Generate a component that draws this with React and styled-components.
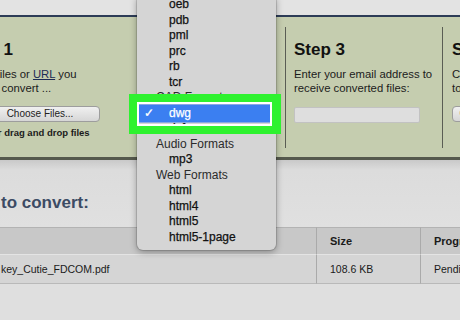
import React from 'react';
import styled, { createGlobalStyle } from 'styled-components';

const GlobalStyle = createGlobalStyle`
  html, body {
    margin: 0;
    padding: 0;
    background: #e0e0e0;
  }
  body {
    font-family: "Liberation Sans", Arial, sans-serif;
    color: #141414;
  }
`;

// page frame
const Page = styled.div`
  position: relative;
  width: 460px;
  height: 320px;
  overflow: hidden;
  background: #dfdfdf;
`;

const TopStrip = styled.div`
  height: 15px;
  background: #e3e3e3;
  border-bottom: 2px solid #2d3c57;
`;

// green steps panel
const Panel = styled.div`
  display: flex;
  height: 130px;
  padding-top: 10px;
  margin-left: -42px;
  background: #c5cdaf;
  border-bottom: 3px solid #55594d;
`;

const Column = styled.div`
  flex: none;
  box-sizing: border-box;
  width: ${p => p.$w}px;
  height: 121px;
  padding: 13px 0 0 ${p => p.$pad}px;
  border-left: ${p => (p.$sep ? '1px solid #5a5d54' : 'none')};
  overflow: hidden;
  white-space: nowrap;
`;

const StepTitle = styled.div`
  font-weight: bold;
  font-size: 17px;
  line-height: 20px;
  color: #111;
`;

const StepText = styled.div`
  margin-top: 7px;
  font-size: 11.3px;
  line-height: 14px;
  color: #1b1b1b;
`;

const Link = styled.span`
  color: #1d2a55;
  text-decoration: underline;
`;

const FileButton = styled.div`
  box-sizing: border-box;
  width: ${p => p.$w}px;
  height: 16px;
  margin: 11px 0 0 ${p => p.$shift}px;
  border: 1px solid #9d9d9d;
  border-radius: 4px;
  background: linear-gradient(#f0f0f0, #d6d6d6);
  font-size: 10px;
  line-height: 14px;
  text-align: center;
  color: #222;
`;

const EmailInput = styled.div`
  box-sizing: border-box;
  width: 126px;
  height: 16px;
  margin-top: 12px;
  border: 1px solid #c2c2c2;
  border-radius: 2px;
  background: #dedede;
`;

const DropNote = styled.div`
  margin: 5px 0 0 30px;
  font-weight: bold;
  font-size: 9.5px;
  line-height: 12px;
  color: #1b1b1b;
`;

// files section
const Section = styled.div`
  height: 34px;
  padding-top: 33px;
  background: linear-gradient(#c9c9c9, #dcdcdc 10px, #e0e0e0);
`;

const Heading = styled.div`
  padding-left: 1px;
  font-weight: bold;
  font-size: 17px;
  line-height: 20px;
  color: #3c4b64;
`;

const Table = styled.div`
  display: grid;
  grid-template-columns: 316px 104px 1fr;
`;

const Cell = styled.div`
  display: flex;
  align-items: center;
  box-sizing: border-box;
  height: ${p => (p.$head ? 27 : 30)}px;
  padding-left: ${p => (p.$first ? 1 : 13)}px;
  background: ${p => (p.$head ? '#c8c8c8' : '#d5d5d5')};
  border-top: 1px solid ${p => (p.$head ? '#b3b3b3' : '#e4e4e4')};
  border-bottom: ${p => (p.$head ? 'none' : '1px solid #b9b9b9')};
  border-left: ${p => (p.$first ? 'none' : '1px solid #aaaaaa')};
  font-size: ${p => (p.$head ? 11 : 10.5)}px;
  font-weight: ${p => (p.$head ? 'bold' : 'normal')};
  color: #1a1a1a;
  white-space: nowrap;
  overflow: hidden;
`;

// format dropdown lying over the panel
const Menu = styled.div`
  position: absolute;
  left: 137px;
  top: -3px;
  width: 139px;
  padding-bottom: 5px;
  background: #d5d5d5;
  border-radius: 0 0 6px 6px;
  box-shadow: 0 2px 7px rgba(0, 0, 0, 0.35), 0 0 0 1px rgba(0, 0, 0, 0.12);
  font-size: 12px;
`;

const Item = styled.div`
  position: relative;
  height: 15.5px;
  line-height: 15.5px;
  margin: ${p => (p.$selected ? '0 4px 0 1px' : '0')};
  padding-left: ${p => (p.$group ? 19 : p.$selected ? 31 : 32)}px;
  color: ${p => (p.$selected ? '#fff' : p.$group ? '#2b2b2b' : '#111')};
  background: ${p => (p.$selected ? '#3b7ff1' : 'transparent')};
  box-shadow: ${p => (p.$selected ? '0 -1.5px 0 #3b7ff1, 0 1.5px 0 #3b7ff1' : 'none')};
  -webkit-text-stroke: ${p => (p.$group ? '0' : '0.25px')};
`;

const Check = styled.span`
  position: absolute;
  left: 6px;
  top: 0;
  font-size: 12px;
`;

const Highlight = styled.div`
  position: absolute;
  left: 129px;
  top: 94px;
  width: 152px;
  height: 40px;
  box-sizing: border-box;
  border: 8px solid #2ef22f;
  border-right-width: 9px;
  box-shadow: inset 0 0 0 2px #ffffff;
  pointer-events: none;
`;

const formats = [
  'oeb', 'pdb', 'pml', 'prc', 'rb', 'tcr',
  { group: 'CAD Formats' }, { name: 'dwg', selected: true }, 'dxf',
  { group: 'Audio Formats' }, 'mp3',
  { group: 'Web Formats' }, 'html', 'html4', 'html5', 'html5-1page',
];

export default function App() {
  return (
    <Page>
      <GlobalStyle />
      <TopStrip />
      <Panel>
        <Column $w={180} $pad={4}>
          <StepTitle>Step 1</StepTitle>
          <StepText>
            Select files or <Link>URL</Link> you<br />want to convert ...
          </StepText>
          <FileButton $w={120} $shift={18}>Choose Files...</FileButton>
          <DropNote>or drag and drop files</DropNote>
        </Column>
        <Column $w={147} $pad={8} $sep>
          <StepTitle>Step 2</StepTitle>
          <StepText>Convert files to:</StepText>
        </Column>
        <Column $w={157} $pad={8} $sep>
          <StepTitle>Step 3</StepTitle>
          <StepText>
            Enter your email address to<br />receive converted files:
          </StepText>
          <EmailInput />
        </Column>
        <Column $w={80} $pad={9} $sep>
          <StepTitle>Step 4</StepTitle>
          <StepText>
            Convert files<br />to the format
          </StepText>
          <FileButton $w={50} $shift={0}>Convert</FileButton>
        </Column>
      </Panel>
      <Section>
        <Heading>to convert:</Heading>
      </Section>
      <Table>
        <Cell $head $first />
        <Cell $head>Size</Cell>
        <Cell $head>Progress</Cell>
        <Cell $first>key_Cutie_FDCOM.pdf</Cell>
        <Cell>108.6 KB</Cell>
        <Cell>Pending</Cell>
      </Table>
      <Menu>
        {formats.map((f, i) => {
          if (typeof f === 'string') return <Item key={i}>{f}</Item>;
          if (f.group) return <Item key={i} $group>{f.group}</Item>;
          return (
            <Item key={i} $selected>
              <Check>✓</Check>
              {f.name}
            </Item>
          );
        })}
      </Menu>
      <Highlight />
    </Page>
  );
}
